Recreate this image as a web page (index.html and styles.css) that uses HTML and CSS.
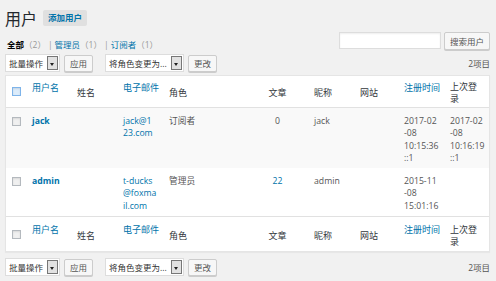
FILE: index.html
```html
<!DOCTYPE html>
<html lang="zh-CN">
<head>
<meta charset="utf-8">
<title>用户</title>
<link rel="stylesheet" href="styles.css">
</head>
<body>
<div class="wrap">
  <div class="head">
    <h1 class="title">用户</h1>
    <a class="add-btn">添加用户</a>
  </div>

  <div class="filters">
    <ul class="views">
      <li><b class="current">全部</b><span class="count">（2）</span></li>
      <li class="sep">|</li>
      <li><a class="link">管理员</a><span class="count">（1）</span></li>
      <li class="sep">|</li>
      <li><a class="link">订阅者</a><span class="count">（1）</span></li>
    </ul>
    <div class="search">
      <span class="search-input"></span>
      <span class="btn search-btn">搜索用户</span>
    </div>
  </div>

  <div class="tablenav top">
    <span class="select sel-bulk"><span class="sel-text">批量操作</span><span class="sel-arrow"></span></span>
    <span class="btn">应用</span>
    <span class="select sel-role"><span class="sel-text">将角色变更为...</span><span class="sel-arrow"></span></span>
    <span class="btn">更改</span>
    <span class="num">2项目</span>
  </div>

  <table class="users">
    <colgroup>
      <col class="c-cb"><col class="c-user"><col class="c-name"><col class="c-mail"><col class="c-role"><col class="c-posts"><col class="c-nick"><col class="c-site"><col class="c-reg"><col class="c-last">
    </colgroup>
    <thead>
      <tr>
        <th class="cb"><span class="check check-focus"></span></th>
        <th class="sortable"><a class="link">用户名</a></th>
        <th>姓名</th>
        <th class="sortable"><a class="link">电子邮件</a></th>
        <th>角色</th>
        <th class="posts">文章</th>
        <th>昵称</th>
        <th>网站</th>
        <th class="sortable"><a class="link">注册时间</a></th>
        <th class="last">上次登录</th>
      </tr>
    </thead>
    <tbody>
      <tr class="alt">
        <td class="cb"><span class="check"></span></td>
        <td><a class="link user">jack</a></td>
        <td></td>
        <td><a class="link">jack@1<br>23.com</a></td>
        <td>订阅者</td>
        <td class="posts">0</td>
        <td>jack</td>
        <td></td>
        <td>2017-02<br>-08<br>10:15:36<br>::1</td>
        <td>2017-02<br>-08<br>10:16:19<br>::1</td>
      </tr>
      <tr>
        <td class="cb"><span class="check"></span></td>
        <td><a class="link user">admin</a></td>
        <td></td>
        <td><a class="link">t-ducks<br>@foxma<br>il.com</a></td>
        <td>管理员</td>
        <td class="posts"><a class="link">22</a></td>
        <td>admin</td>
        <td></td>
        <td>2015-11<br>-08<br>15:01:16</td>
        <td></td>
      </tr>
    </tbody>
    <tfoot>
      <tr>
        <th class="cb"><span class="check"></span></th>
        <th class="sortable"><a class="link">用户名</a></th>
        <th>姓名</th>
        <th class="sortable"><a class="link">电子邮件</a></th>
        <th>角色</th>
        <th class="posts">文章</th>
        <th>昵称</th>
        <th>网站</th>
        <th class="sortable"><a class="link">注册时间</a></th>
        <th class="last">上次登录</th>
      </tr>
    </tfoot>
  </table>

  <div class="tablenav bottom">
    <span class="select sel-bulk"><span class="sel-text">批量操作</span><span class="sel-arrow"></span></span>
    <span class="btn">应用</span>
    <span class="select sel-role"><span class="sel-text">将角色变更为...</span><span class="sel-arrow"></span></span>
    <span class="btn">更改</span>
    <span class="num">2项目</span>
  </div>
</div>
</body>
</html>
```
FILE: styles.css
```css
html, body {
  margin: 0;
  padding: 0;
  background: #f1f1f1;
}
body {
  font-family: "Open Sans", "Noto Sans CJK SC", sans-serif;
  font-size: 9px;
  color: #555;
  width: 496px;
  height: 281px;
  overflow: hidden;
}
.wrap {
  padding: 10px 6px 0 5px;
}
.head {
  display: flex;
  align-items: center;
  height: 16px;
}
.title {
  margin: 0;
  font-family: "Noto Sans CJK SC", sans-serif;
  font-size: 16px;
  font-weight: 400;
  line-height: 16px;
  color: #23282d;
}
.add-btn {
  margin-left: 6px;
  height: 16px;
  line-height: 16px;
  padding: 0 5px;
  background: #e0e0e0;
  color: #0073aa;
  font-size: 8.5px;
  font-weight: 600;
  border-radius: 2px;
}
.link {
  color: #0073aa;
  text-decoration: none;
}
.filters {
  display: flex;
  justify-content: space-between;
  margin-top: 6px;
  height: 17px;
}
.views {
  display: flex;
  margin: 0;
  padding: 8px 0 0 2px;
  list-style: none;
  line-height: 10px;
  font-size: 8.5px;
}
.views li {
  display: flex;
}
.current {
  color: #000;
  font-weight: 700;
}
.count {
  color: #999;
}
.sep {
  color: #999;
  padding: 0 2px;
}
.search {
  display: flex;
  gap: 3px;
}
.search-input {
  width: 100px;
  height: 15px;
  background: #fff;
  border: 1px solid #ddd;
  box-shadow: inset 0 1px 2px rgba(0,0,0,.07);
}
.btn {
  display: inline-flex;
  align-items: center;
  justify-content: center;
  height: 16px;
  padding: 0 5px;
  background: #f7f7f7;
  border: 1px solid #ccc;
  border-radius: 2px;
  box-shadow: 0 1px 0 #ccc;
  color: #555;
  font-size: 8.5px;
  box-sizing: content-box;
}
.search-btn {
  padding: 0 5px;
}
.tablenav {
  display: flex;
  align-items: center;
  height: 18px;
}
.tablenav.top {
  margin-top: 5px;
}
.tablenav.bottom {
  margin-top: 6px;
}
.select {
  display: flex;
  align-items: stretch;
  height: 18px;
  box-sizing: border-box;
  background: #fff;
  border: 1px solid #ddd;
  padding: 1px;
  color: #333;
  font-size: 8.5px;
}
.sel-text {
  display: flex;
  align-items: center;
  flex: 1;
  padding-left: 2px;
  white-space: nowrap;
}
.sel-arrow {
  width: 9px;
  border: 1px solid #777;
  background: #e2e2e2;
  position: relative;
}
.sel-arrow::after {
  content: "";
  position: absolute;
  left: 2px;
  top: 6px;
  border-left: 2.5px solid transparent;
  border-right: 2.5px solid transparent;
  border-top: 3px solid #222;
}
.sel-bulk {
  width: 55px;
}
.sel-role {
  width: 79px;
  margin-left: 12px;
}
.tablenav .btn {
  margin-left: 4px;
  height: 15px;
}
.num {
  margin-left: auto;
  font-size: 8.5px;
  color: #555;
}
.users {
  margin-top: 3px;
  width: 485px;
  table-layout: fixed;
  border-spacing: 0;
  background: #fff;
  border: 1px solid #e5e5e5;
  box-shadow: 0 1px 1px rgba(0,0,0,.04);
  font-family: "Open Sans", "Noto Sans CJK SC", sans-serif;
}
.c-cb { width: 21px; }
.c-user { width: 45px; }
.c-name { width: 46px; }
.c-mail { width: 46px; }
.c-role { width: 90px; }
.c-posts { width: 55px; }
.c-nick { width: 46px; }
.c-site { width: 44px; }
.c-reg { width: 46px; }
.c-last { width: 44px; }
.users thead tr {
  height: 32px;
}
.users tfoot tr {
  height: 35px;
}
.users th {
  font-weight: 400;
  text-align: left;
  color: #32373c;
  font-size: 9px;
  line-height: 12px;
  padding: 3px 5px 0;
  vertical-align: middle;
}
.users thead th {
  border-bottom: 1px solid #e1e1e1;
}
.users tfoot th {
  border-top: 1px solid #e1e1e1;
  padding-top: 4px;
}
.users th.cb {
  padding-top: 0;
}
.users th.sortable {
  vertical-align: top;
  padding-top: 6px;
}
.users tfoot th.sortable {
  padding-top: 7px;
}
.users th.cb,
.users td.cb {
  padding-left: 6px;
  padding-right: 0;
}
.users td.cb {
  vertical-align: top;
  padding-top: 9px;
}
.users th.last {
  padding-right: 9px;
  word-break: break-all;
}
.users .posts {
  text-align: center;
  padding-right: 13px;
}
.users td {
  vertical-align: top;
  padding: 7px 5px 4px;
  line-height: 12.3px;
  font-size: 8.7px;
  color: #555;
}
.users tr.alt td {
  background: #f9f9f9;
}
.user {
  font-weight: 700;
}
.check {
  display: block;
  width: 7px;
  height: 7px;
  border: 1px solid #b4b9be;
  background: #f0f0f0;
  box-shadow: inset 0 1px 2px rgba(0,0,0,.1);
}
.check-focus {
  border-color: #7eb4ea;
  background: #dcecfb;
}
```
